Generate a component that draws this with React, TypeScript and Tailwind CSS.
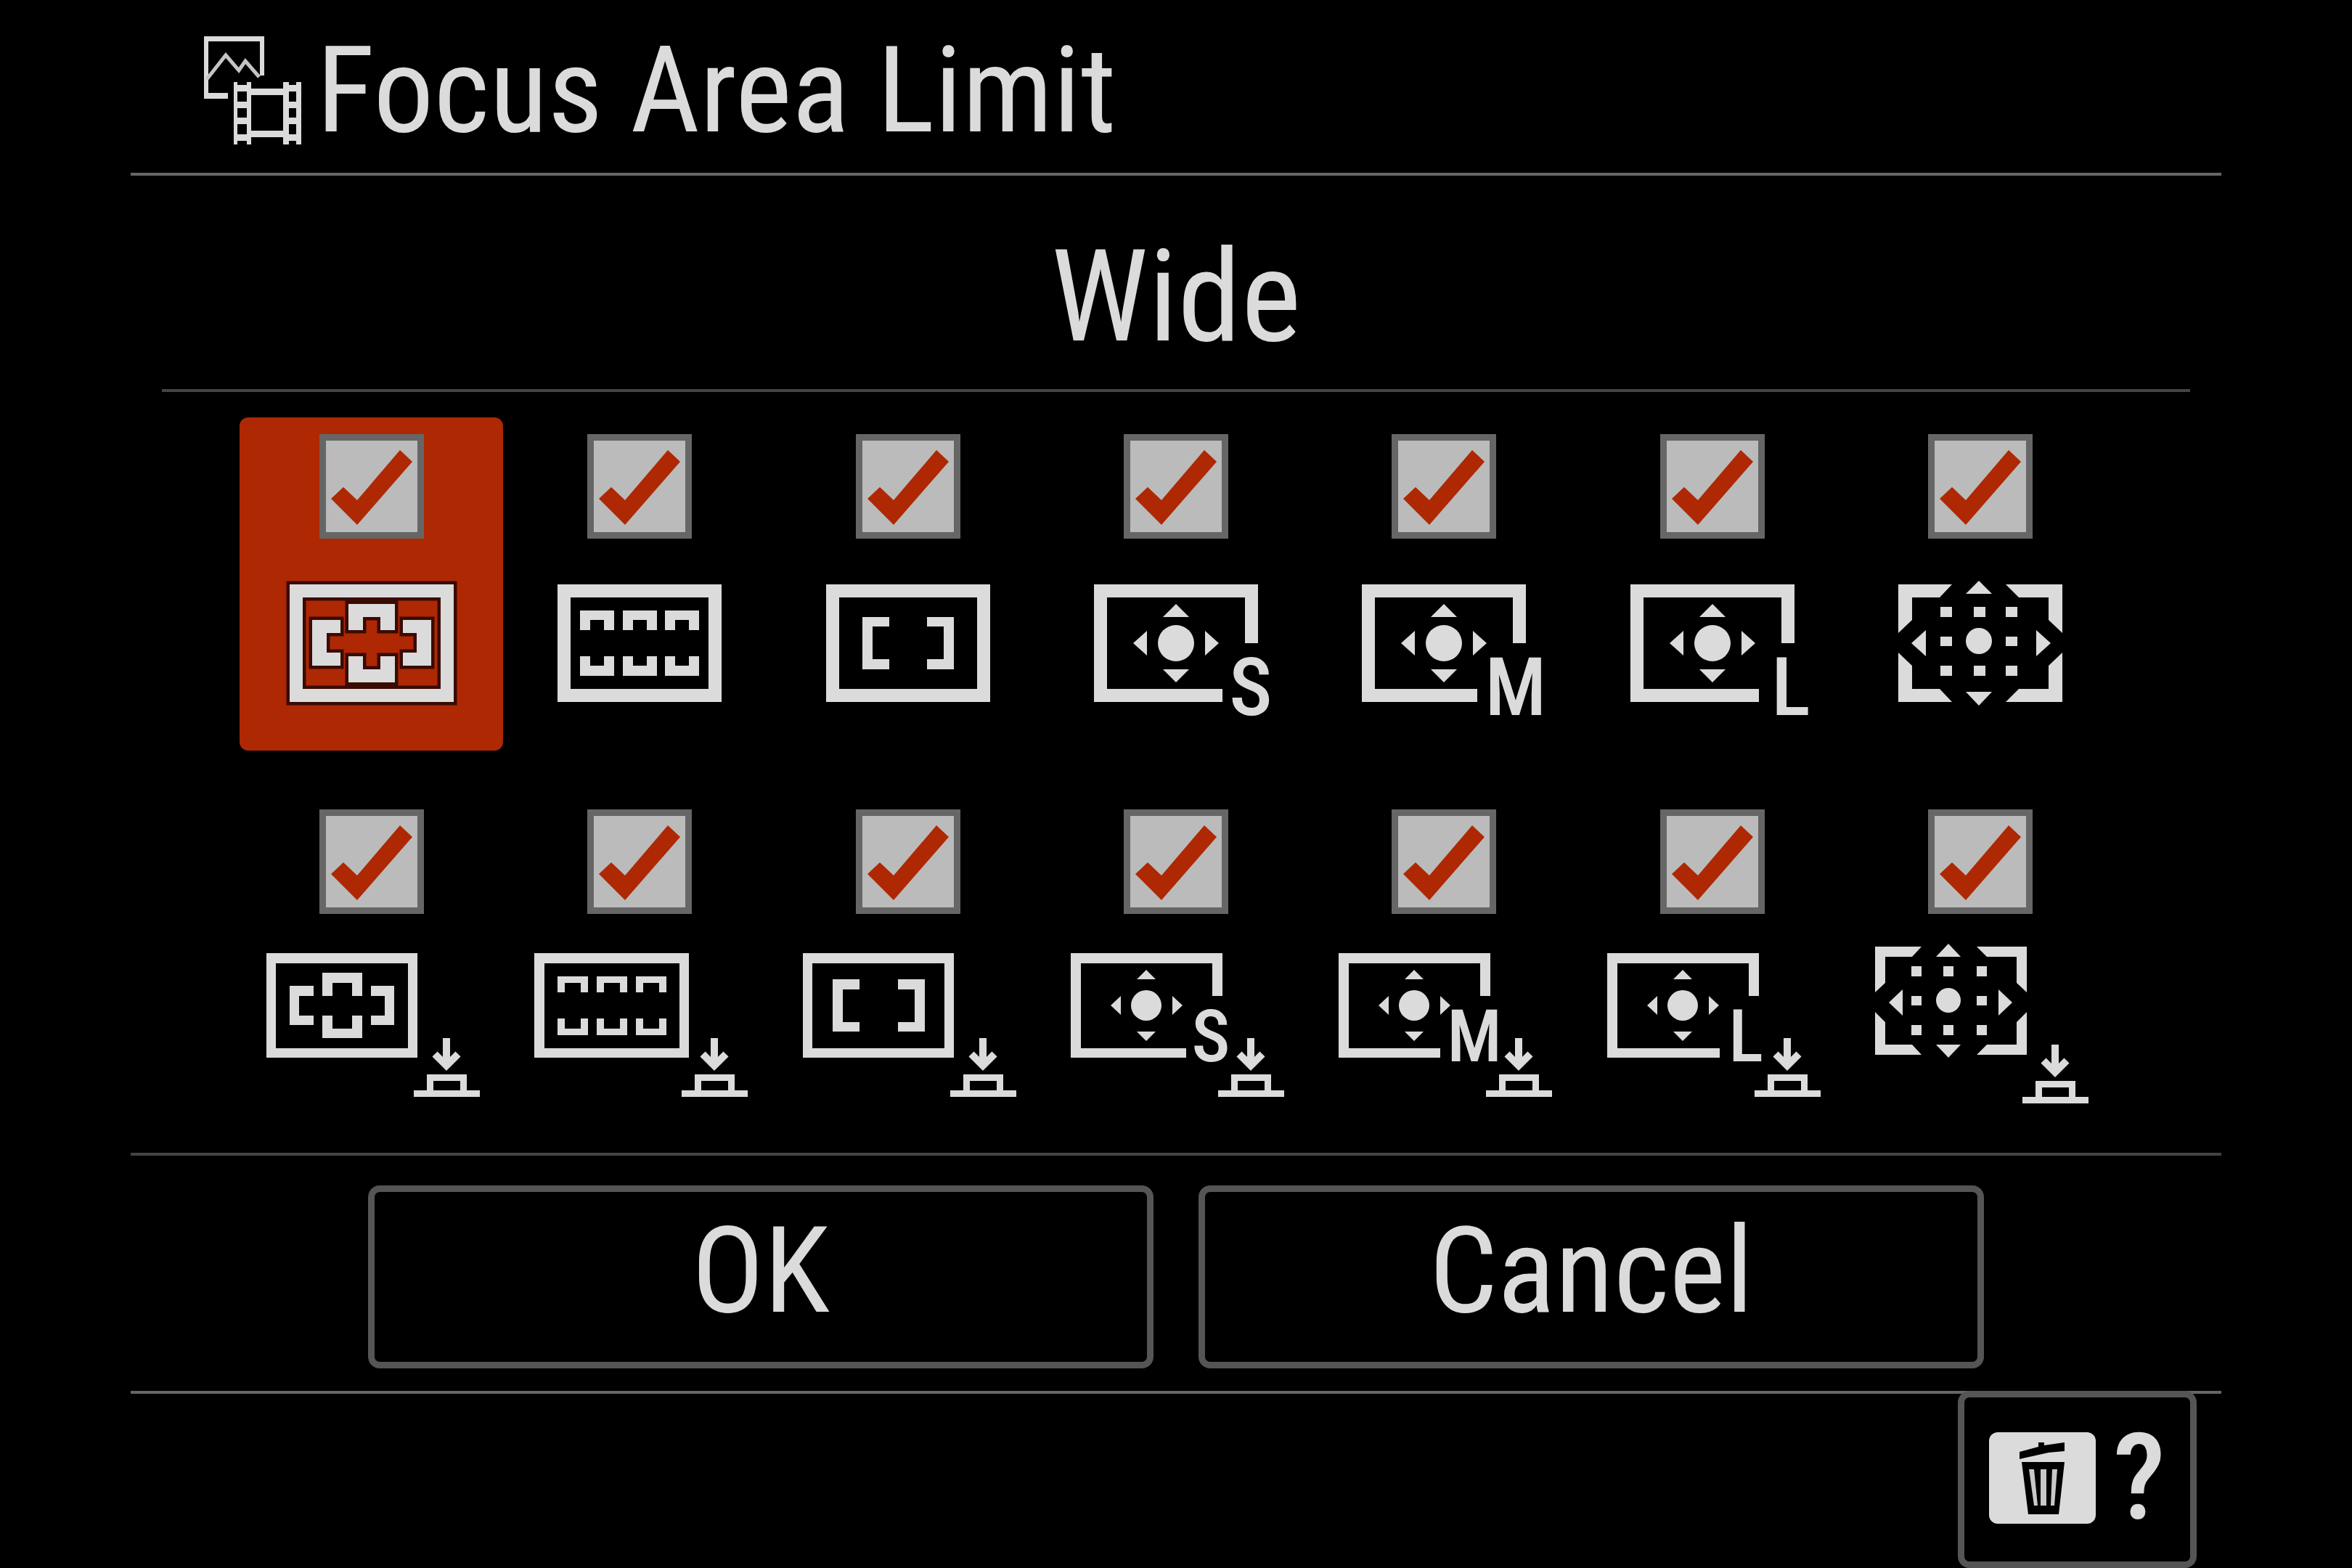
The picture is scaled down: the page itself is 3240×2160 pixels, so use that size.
import React, { useState } from 'react';

// Define the focus area option interface
interface FocusArea {
  id: string;
  name: string;
  shape: string;
  letter?: string;
  letterX?: number;
  tracking?: boolean;
}

const DOTS = 'M-55 36h16v14h-16z M-9 36h16v14h-16z M35 36h16v14h-16z M-55 77h16v13h-16z M35 77h16v13h-16z M-55 117h16v14h-16z M-9 117h16v14h-16z M35 117h16v14h-16z';
const DOTS_SMALL = 'M-95 39h14v14h-14z M-51 39h14v14h-14z M-5 39h14v14h-14z M-95 80h14v13h-14z M-5 80h14v13h-14z M-95 120h14v14h-14z M-51 120h14v14h-14z M-5 120h14v14h-14z';

const FRAME = 'M-113 5H113V167H-113Z M-95 23V149H95V23Z';
const FRAME_SMALL = 'M-145 21H63V165H-145Z M-132 35V152H50V35Z';

// Round point with four arrows around it
const SPOT = 'M-25 86a25 25 0 0 1 50 0a25 25 0 0 1 -50 0z M0 32L18 50H-18Z M0 140L-18 122H18Z M-59 86L-40 69V103Z M59 86L40 103V69Z';
const SPOT_SMALL = 'M-62 93a21 21 0 0 1 42 0a21 21 0 0 1 -42 0z M-41 44L-28 57H-54Z M-41 142L-54 129H-28Z M-90 93L-76 80V106Z M9 93L-5 106V80Z';

const stillAreas: FocusArea[] = [
  {
    id: 'wide',
    name: 'Wide',
    shape: `${FRAME} M-82 54H-43V72H-62V99H-43V117H-82Z M82 54V117H43V99H62V72H43V54Z M-32 32H32V68H12V50H-12V68H-32Z M-32 104H-12V122H12V104H32V140H-32Z`,
  },
  {
    id: 'zone',
    name: 'Zone',
    shape: `${FRAME} M-82 41h47v27h-14v-14h-19v14h-14z M-23 41h47v27h-14v-14h-19v14h-14z M35 41h47v27h-14v-14h-19v14h-14z M-82 104h14v13h19v-13h14v27h-47z M-23 104h14v13h19v-13h14v27h-47z M35 104h14v13h19v-13h14v27h-47z`,
  },
  {
    id: 'center',
    name: 'Center Fix',
    shape: `${FRAME} M-63 50H-26V63H-49V108H-26V122H-63Z M63 50V122H26V108H49V63H26V50Z`,
  },
  { id: 'spot-s', name: 'Spot: S', shape: `M-113 5H113V86H95V23H-95V149H64V167H-113Z ${SPOT}`, letter: 'S', letterX: 103 },
  { id: 'spot-m', name: 'Spot: M', shape: `M-113 5H113V86H95V23H-95V149H46V167H-113Z ${SPOT}`, letter: 'M', letterX: 99 },
  { id: 'spot-l', name: 'Spot: L', shape: `M-113 5H113V86H95V23H-95V149H64V167H-113Z ${SPOT}`, letter: 'L', letterX: 108 },
  {
    id: 'expand',
    name: 'Expand Spot',
    shape: `M-113 5H-39L-56 23H-94V54L-113 72Z M113 5V72L94 54V23H53L35 5Z M-113 167V99L-94 117V149H-56L-39 167Z M113 167H35L53 149H94V117L113 99Z M-2 0L16 18H-20Z M-2 172L-20 153H16Z M-95 86L-75 68V104Z M97 86L77 104V68Z M-20 83a18 18 0 0 1 36 0a18 18 0 0 1 -36 0z ${DOTS}`,
  },
];

const trackingAreas: FocusArea[] = [
  {
    id: 'tracking-wide',
    name: 'Tracking: Wide',
    tracking: true,
    shape: `${FRAME_SMALL} M-113 66H-80V80H-100V107H-80V120H-113Z M31 66V120H-1V107H18V80H-1V66Z M-68 48H-13V80H-27V62H-54V80H-68Z M-68 107H-54V125H-27V107H-13V138H-68Z`,
  },
  {
    id: 'tracking-zone',
    name: 'Tracking: Zone',
    tracking: true,
    shape: `M-145 21H68V165H-145Z M-131 35V152H55V35Z M-113 53h42v22h-10v-13h-22v13h-10z M-59 53h42v22h-10v-13h-22v13h-10z M-5 53h42v22h-10v-13h-22v13h-10z M-113 111h10v14h22v-14h10v23h-42z M-59 111h10v14h22v-14h10v23h-42z M-5 111h10v14h22v-14h10v23h-42z`,
  },
  {
    id: 'tracking-center',
    name: 'Tracking: Center Fix',
    tracking: true,
    shape: `${FRAME_SMALL} M-104 57H-67V71H-90V116H-67V129H-104Z M23 57V129H-14V116H9V71H-14V57Z`,
  },
  { id: 'tracking-s', name: 'Tracking: Spot S', tracking: true, shape: `M-145 21H64V80H50V35H-131V152H14V165H-145Z ${SPOT_SMALL}`, letter: 'S', letterX: 48 },
  { id: 'tracking-m', name: 'Tracking: Spot M', tracking: true, shape: `M-145 21H64V80H50V35H-131V152H-5V165H-145Z ${SPOT_SMALL}`, letter: 'M', letterX: 42 },
  { id: 'tracking-l', name: 'Tracking: Spot L', tracking: true, shape: `M-145 21H64V80H50V35H-131V152H10V165H-145Z ${SPOT_SMALL}`, letter: 'L', letterX: 46 },
  {
    id: 'tracking-expand',
    name: 'Tracking: Expand Spot',
    tracking: true,
    shape: `M-145 12H-81L-94 26H-131V62L-145 75Z M64 12V75L50 62V26H9L-5 12Z M-145 161V102L-131 116V147H-94L-81 161Z M64 161H-5L9 147H50V116L64 102Z M-44 8L-27 26H-61Z M-44 165L-61 147H-27Z M-126 89L-107 71V107Z M44 89L25 107V71Z M-61 86a17 17 0 0 1 34 0a17 17 0 0 1 -34 0z ${DOTS_SMALL}`,
  },
];

const areas: FocusArea[] = [...stillAreas, ...trackingAreas];

const AreaIcon: React.FC<{ area: FocusArea; active: boolean }> = ({ area, active }) => {
  return (
    <svg
      viewBox={area.tracking ? '-180 0 360 250' : '-180 -25 360 250'}
      className="h-[250px] w-[360px] fill-[#dbdbdb]"
      aria-hidden="true"
    >
      <path
        d={area.shape}
        className={active ? 'stroke-[#3a0b02]' : 'stroke-none'}
        strokeWidth="9"
        paintOrder="stroke"
      />
      {area.letter && (
        <text
          x={area.letterX}
          y={area.tracking ? 170 : 185}
          textAnchor="middle"
          className={area.tracking ? 'text-[100px] font-medium' : 'text-[112px] font-medium'}
        >
          {area.letter}
        </text>
      )}
      {/* Half-pressed shutter mark */}
      {area.tracking && (
        <g transform={area.id === 'tracking-expand' ? 'translate(0 9)' : undefined}>
          <path d="M58 210H76V188H131V210H149V219H58Z M85 197V210H122V197Z" />
          <path d="M103 138V176M87 160L103 176L119 160" className="fill-none stroke-[#dbdbdb]" strokeWidth="10" />
        </g>
      )}
    </svg>
  );
};

const PhotoMovieIcon: React.FC = () => (
  <svg viewBox="0 0 150 165" className="h-[165px] w-[150px] shrink-0 fill-[#dbdbdb]" aria-hidden="true">
    <path d="M11 9H94V63H88V16H17V87H44V95H11Z" />
    <path d="M15 68L41 35L59 56L68 43L87 65" className="fill-none stroke-[#c4c4c4]" strokeWidth="5" />
    <path d="M52 72h5v86h-5z M70 72h6v86h-6z M120 72h8v86h-8z M138 72h7v86h-7z M76 81h44v9h-44z M76 139h44v9h-44z" />
    <path d="M56 76h15v9h-15z M56 99h15v9h-15z M56 121h15v9h-15z M56 144h15v9h-15z M126 76h14v9h-14z M126 99h14v9h-14z M126 121h14v9h-14z M126 144h14v9h-14z" />
  </svg>
);

const TrashIcon: React.FC = () => (
  <svg viewBox="0 0 66 102" className="h-[102px] w-[66px]" aria-hidden="true">
    <path d="M2 15L28 8V2H36V6L64 2V14L42 16L2 25Z" />
    <path d="M5 29H64L56 101H14Z" />
    <path d="M15 39H22L27 89H22Z M31 39H39V89H31Z M47 39H54L50 89H45Z" className="fill-[#c8c8c8]" />
  </svg>
);

const FocusAreaLimit: React.FC = () => {
  const [selected, setSelected] = useState<string>('wide');
  const [enabled, setEnabled] = useState<string[]>(areas.map((area) => area.id));

  const current = areas.find((area) => area.id === selected);

  const handleToggle = (id: string) => {
    setSelected(id);
    setEnabled((prev) => (prev.includes(id) ? prev.filter((item) => item !== id) : [...prev, id]));
  };

  const handleReset = () => {
    setEnabled(areas.map((area) => area.id));
  };

  return (
    <div className="min-h-screen bg-black font-['Roboto_Condensed','Liberation_Sans_Narrow','Liberation_Sans',sans-serif] text-[#dbdbdb]">
      <header className="mx-[180px] flex h-[242px] items-center border-b-4 border-[#666] pt-2 pl-[90px]">
        <PhotoMovieIcon />
        <h1 className="ml-4 pt-1 text-[166px] leading-[200px]">Focus Area Limit</h1>
      </header>

      <main>
        <h2 className="mx-[223px] flex h-[298px] items-center justify-center border-b-4 border-[#444] pt-10 text-[176px] leading-[200px]">
          {current?.name}
        </h2>

        {/* Focus area options */}
        <div className="mx-[180px] grid grid-cols-7 gap-x-[6px] gap-y-[58px] border-b-4 border-[#444] px-[150px] pt-[35px] pb-[37px]">
          {areas.map((area) => (
            <label
              key={area.id}
              className={`flex flex-col items-center gap-[33px] rounded-xl pt-[23px] pb-[9px] ${area.id === selected ? 'bg-[#ae2804]' : ''}`}
            >
              <span className="grid">
                <input
                  type="checkbox"
                  aria-label={area.name}
                  checked={enabled.includes(area.id)}
                  onChange={() => handleToggle(area.id)}
                  className="peer col-start-1 row-start-1 size-36 appearance-none border-[9px] border-[#666] bg-[#bbb] outline-none"
                />
                <svg
                  viewBox="0 0 144 144"
                  className="pointer-events-none invisible col-start-1 row-start-1 size-36 fill-[#ae2804] peer-checked:visible"
                  aria-hidden="true"
                >
                  <path d="M16 89L33 73L52 91L111 22L128 38L52 125Z" />
                </svg>
              </span>
              <AreaIcon area={area} active={area.id === selected} />
            </label>
          ))}
        </div>

        <div className="mx-[180px] flex gap-[62px] border-b-4 border-[#666] px-[327px] pt-[41px] pb-[31px]">
          <button type="button" className="h-[252px] flex-1 rounded-2xl border-[9px] border-[#555] pb-4 text-[166px] leading-[200px]">
            OK
          </button>
          <button
            type="button"
            onClick={handleReset}
            className="h-[252px] flex-1 rounded-2xl border-[9px] border-[#555] pb-4 text-[166px] leading-[200px]"
          >
            Cancel
          </button>
        </div>
      </main>

      <footer className="mx-[214px] flex justify-end">
        <button
          type="button"
          aria-label="Help"
          className="-mt-1 flex h-[244px] w-[329px] items-center justify-center gap-6 rounded-2xl border-[9px] border-[#555] bg-black pb-1"
        >
          <span className="flex h-[126px] w-[147px] items-center justify-center rounded-xl bg-[#dbdbdb]">
            <TrashIcon />
          </span>
          <span className="text-[166px] leading-[166px] font-medium">?</span>
        </button>
      </footer>
    </div>
  );
};

export default FocusAreaLimit;
